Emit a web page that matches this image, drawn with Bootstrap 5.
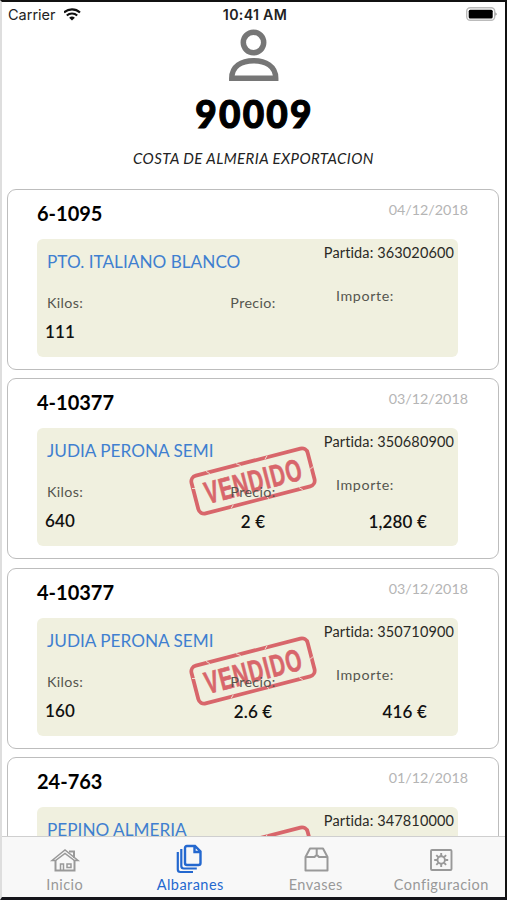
<!DOCTYPE html>
<html lang="es">
<head>
<meta charset="utf-8">
<meta name="viewport" content="width=device-width, initial-scale=1">
<title>Albaranes</title>
<link href="https://cdn.jsdelivr.net/npm/bootstrap@5.3.0/dist/css/bootstrap.min.css" rel="stylesheet">
<style>
html, body { height: 900px; overflow: hidden; }
body { font-family: Lato, "Liberation Sans", sans-serif; color: #0a0a0a; background: #fff; font-variant-ligatures: none; }
.phone { height: 900px; border: 2px solid #111; border-bottom: 3px solid #15151a; border-left-color: #dedede; }
.status { height: 25px; font: 14.5px/25px Inter, "Liberation Sans", sans-serif; color: #222; }
.status-side { width: 150px; }
.carrier { padding-left: 2px; }
.status-time { font-weight: 600; letter-spacing: .3px; font-size: 14.200px; padding-left: 3px; }
.profile { height: 161.500px; }
.avatar { margin-top: 2px; }
.code { font-size: 37px; font-weight: 900; line-height: 40px; margin-top: 12px; letter-spacing: 2.200px; padding-left: 2px; color: #000; -webkit-text-stroke: 1.100px #000; }
.company { font-size: 15px; font-style: italic; line-height: 20px; margin-top: 14px; letter-spacing: .42px; color: #222; }
.deliveries { padding: 0 6px 0 5px; gap: 8.500px; min-height: 0; }
.delivery { height: 181px; border: 1px solid #bdbdbd; border-radius: 9px; padding: 0 40px 0 29px; }
.delivery-head { height: 49px; }
.number { font-size: 20px; font-weight: 700; line-height: 24px; padding-top: 11px; color: #000; }
.date { font-size: 14.300px; line-height: 18px; padding-top: 11px; color: #b5b5b5; letter-spacing: 0; margin-right: -10px; }
.panel { height: 118px; background: #f0f0df; border-radius: 6px; }
.panel-head { height: 44px; padding: 0 4px 0 10px; }
.product { font-size: 17.200px; line-height: 22px; padding-top: 12px; color: #3f7fd0; }
.batch { font-size: 14.500px; line-height: 18px; padding-top: 5px; letter-spacing: .12px; color: #2a2a26; }
.field { font-size: 14.300px; line-height: 18px; letter-spacing: .35px; color: #55564f; position: relative; z-index: 1; }
.kilos { width: 150px; padding: 11px 0 0 8px; }
.kilos .field { padding-left: 2px; }
.price { width: 132px; padding-top: 11px; }
.amount { width: 139px; padding: 4px 31px 0 17px; }
.amount .field { text-align: left; white-space: nowrap; letter-spacing: .6px; }
.value { font-size: 17px; font-weight: 600; line-height: 22px; margin-top: 9px; letter-spacing: .15px; color: #111; position: relative; z-index: 1; }
.price .value { margin-top: 10px; }
.amount .value { margin-top: 17px; }
.stamp { position: absolute; left: 150px; top: 16px; }
.stamp text { font: 700 31px "Liberation Sans", sans-serif; }
.tabs { height: 61px; background: #f8f8f8; border-top: 1px solid #cfcfcf; color: #999; font-size: 14.500px; line-height: 18px; letter-spacing: .45px; padding-right: 1px; }
.tab svg { height: 32px; margin-top: 7px; width: 32px; }
.tab-on { color: #2468cf; }
.tab-on svg { margin: 5.500px 2px 1.500px 0; }
</style>
</head>
<body>
<main class="phone d-flex flex-column overflow-hidden">
  <header class="status d-flex justify-content-between flex-shrink-0">
    <div class="status-side d-flex align-items-center ps-1"><span class="carrier">Carrier</span>
      <svg class="ms-2" width="18" height="13" viewBox="1 0 18 13"><g fill="none" stroke="#111" stroke-width="2.1"><path d="M1 4.5C5.5.3 12.500.3 17 4.500"/><path d="M3.800 7.500C6.700 4.800 11.300 4.800 14.200 7.500"/></g><path d="M9 12.600 6.100 9.700Q9 7.400 11.900 9.700Z" fill="#111"/></svg>
    </div>
    <div class="status-time">10:41 AM</div>
    <div class="status-side d-flex align-items-center justify-content-end pe-2"><svg width="31" height="15" viewBox="1 1 31 15"><rect x="1.700" y="1.700" width="28" height="12.600" rx="3.500" fill="#fff" stroke="#bbb" stroke-width="1.400"/><rect x="3.700" y="3.700" width="24" height="8.800" rx="1.500"/><path d="M30.500 6.200q2.200 1.800 0 3.600z" fill="#777"/></svg></div>
  </header>
  <section class="profile d-flex flex-column align-items-center flex-shrink-0">
    <svg class="avatar" width="50" height="53" viewBox="0 0 50 53" fill="none" stroke="#767676" stroke-width="5.500"><circle cx="24.500" cy="13.500" r="10.200"/><path d="M2.800 49.200C2.800 37 12.500 31.700 24.500 31.700S46.700 37 46.700 49.200Z"/></svg>
    <h1 class="code mb-0">90009</h1>
    <p class="company mb-0">COSTA DE ALMERIA EXPORTACION</p>
  </section>
  <section class="deliveries d-flex flex-column flex-grow-1 overflow-hidden">
    <article class="delivery flex-shrink-0">
      <div class="delivery-head d-flex justify-content-between"><div class="number">6-1095</div><div class="date">04/12/2018</div></div>
      <div class="panel position-relative">
        <div class="panel-head d-flex justify-content-between"><div class="product">PTO. ITALIANO BLANCO</div><div class="batch">Partida: 363020600</div></div>
        <div class="d-flex">
          <div class="kilos"><div class="field">Kilos:</div><div class="value">111</div></div>
          <div class="price text-center"><div class="field">Precio:</div></div>
          <div class="amount text-end"><div class="field">Importe:</div></div>
        </div>
      </div>
    </article>
    <article class="delivery flex-shrink-0">
      <div class="delivery-head d-flex justify-content-between"><div class="number">4-10377</div><div class="date">03/12/2018</div></div>
      <div class="panel position-relative">
        <svg class="stamp" width="132" height="74" viewBox="-66 -37 132 74"><defs><g id="sold" transform="rotate(-14.500)"><rect x="-60" y="-19.500" width="120" height="39" rx="6" fill="none" stroke="#d8666b" stroke-width="3.800"/><text transform="scale(.66 1)" x="0" y="11" text-anchor="middle" textLength="150" fill="#d8666b" stroke="#d8666b" stroke-width=".7">VENDIDO</text><path d="M-61-8l4 1M-43-21l3 3M-12-21l4 3M20-21l-3 3M58 3l4-2M43 18l3 3M-25 18l-3 3M9 18l2 3" fill="none" stroke="#f0f0df" stroke-width=".8"/></g></defs><use href="#sold"/></svg>
        <div class="panel-head d-flex justify-content-between"><div class="product">JUDIA PERONA SEMI</div><div class="batch">Partida: 350680900</div></div>
        <div class="d-flex">
          <div class="kilos"><div class="field">Kilos:</div><div class="value">640</div></div>
          <div class="price text-center"><div class="field">Precio:</div><div class="value">2 €</div></div>
          <div class="amount text-end"><div class="field">Importe:</div><div class="value">1,280 €</div></div>
        </div>
      </div>
    </article>
    <article class="delivery flex-shrink-0">
      <div class="delivery-head d-flex justify-content-between"><div class="number">4-10377</div><div class="date">03/12/2018</div></div>
      <div class="panel position-relative">
        <svg class="stamp" width="132" height="74" viewBox="-66 -37 132 74"><use href="#sold"/></svg>
        <div class="panel-head d-flex justify-content-between"><div class="product">JUDIA PERONA SEMI</div><div class="batch">Partida: 350710900</div></div>
        <div class="d-flex">
          <div class="kilos"><div class="field">Kilos:</div><div class="value">160</div></div>
          <div class="price text-center"><div class="field">Precio:</div><div class="value">2.6 €</div></div>
          <div class="amount text-end"><div class="field">Importe:</div><div class="value">416 €</div></div>
        </div>
      </div>
    </article>
    <article class="delivery flex-shrink-0">
      <div class="delivery-head d-flex justify-content-between"><div class="number">24-763</div><div class="date">01/12/2018</div></div>
      <div class="panel position-relative">
        <svg class="stamp" width="132" height="74" viewBox="-66 -37 132 74"><use href="#sold"/></svg>
        <div class="panel-head d-flex justify-content-between"><div class="product">PEPINO ALMERIA</div><div class="batch">Partida: 347810000</div></div>
      </div>
    </article>
  </section>
  <nav class="tabs d-flex flex-shrink-0 text-center">
    <div class="tab col-3 d-flex flex-column align-items-center"><svg viewBox="0 0 32 32" fill="none" stroke="currentColor"><path d="M3 16.500 16 6l13 10.500H25.500L16 9.500 6.500 16.500Z" stroke-width="1.500"/><path d="M6.500 16v10.500h19V16M21 8.500V7.500h4v6.500" stroke-width="2"/><path d="M11.500 26v-6h3v6M18 20h4v3.500h-4z" stroke-width="1.500"/></svg><span>Inicio</span></div>
    <div class="tab tab-on col-3 d-flex flex-column align-items-center"><svg viewBox="0 0 32 32" fill="none" stroke="currentColor" stroke-width="2.400"><path d="M14 3h8l5.500 5.500V20q0 2-2 2H14q-2 0-2-2V5q0-2 2-2ZM21.500 3v6h6"/><path d="M8.300 6v17q0 2.500 2.500 2.500h13M4.800 9v17.500Q4.800 29 7.300 29H20" stroke-width="2.200"/></svg><span>Albaranes</span></div>
    <div class="tab col-3 d-flex flex-column align-items-center"><svg viewBox="0 0 32 32" fill="none" stroke="currentColor" stroke-width="2" stroke-linejoin="round"><path d="M5.500 13v13.500h22V13L23 4.500H10L5.500 13ZM5.500 13h9l1.500-1.500h1.500L19 13h8.500M16.700 4.500v7"/></svg><span>Envases</span></div>
    <div class="tab col-3 d-flex flex-column align-items-center"><svg viewBox="0 0 32 32" fill="none" stroke="currentColor" stroke-width="1.900"><rect x="6" y="6" width="20.500" height="20" rx="1"/><circle cx="16.200" cy="16" r="3.700"/><path d="M16.200 9v3M16.200 20v3M9.200 16h3M20.200 16h3M11.300 11.100l2 2M19.100 18.900l2 2M11.300 20.900l2-2M19.100 13.100l2-2"/></svg><span>Configuracion</span></div>
  </nav>
</main>
<script src="https://cdn.jsdelivr.net/npm/bootstrap@5.3.0/dist/js/bootstrap.bundle.min.js"></script>
</body>
</html>
